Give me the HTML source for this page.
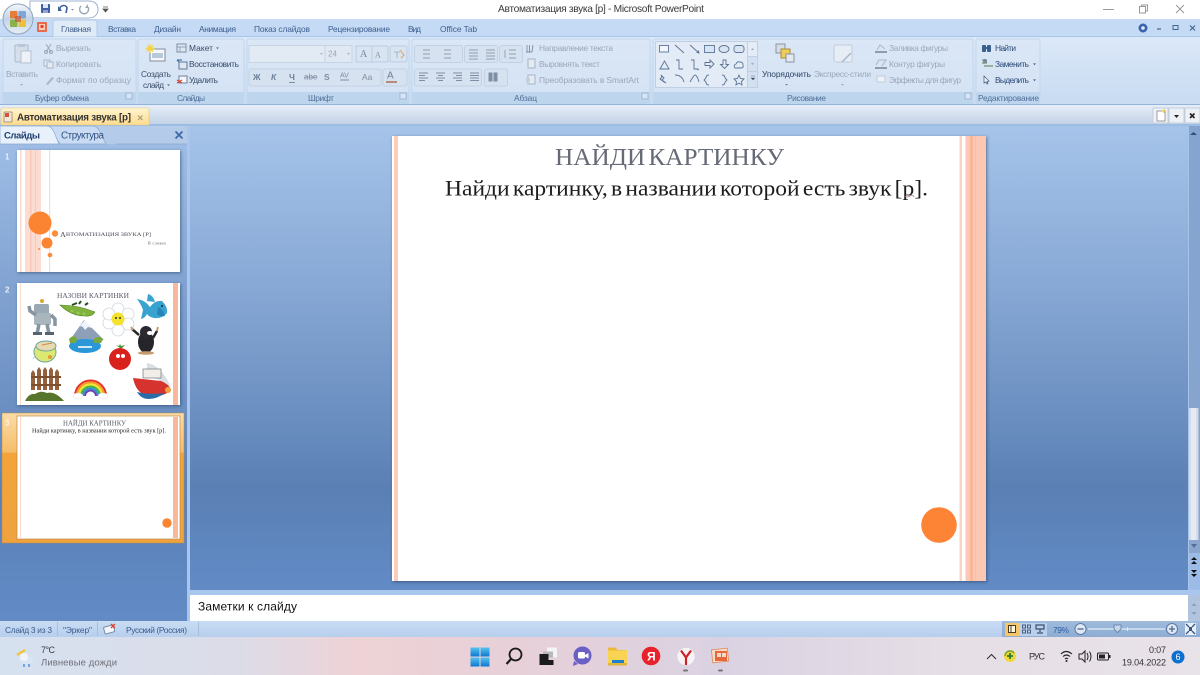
<!DOCTYPE html>
<html><head><meta charset="utf-8"><style>
html,body{margin:0;padding:0;width:1200px;height:675px;overflow:hidden;background:#fff}
svg{display:block}
text{font-family:"Liberation Sans",sans-serif;font-size:8.4px;fill:#44546a;dominant-baseline:central;white-space:pre}
.g{fill:#9aa7b8}.b{fill:#2c4a78}.l{fill:#4f6f98}.s{font-family:"Liberation Serif",serif}
.ic{fill:none;stroke:#5c7496;stroke-width:.9}
</style></head><body>
<svg width="1200" height="675" viewBox="0 0 1200 675" xmlns="http://www.w3.org/2000/svg">
<defs>
<linearGradient id="rb" x1="0" y1="0" x2="0" y2="1"><stop offset="0" stop-color="#dbe8f8"/><stop offset="1" stop-color="#c8dbf2"/></linearGradient>
<linearGradient id="grp" x1="0" y1="0" x2="0" y2="1"><stop offset="0" stop-color="#dbe7f6"/><stop offset="1" stop-color="#d3e2f4"/></linearGradient>
<linearGradient id="tabbar" x1="0" y1="0" x2="0" y2="1"><stop offset="0" stop-color="#e6eef9"/><stop offset=".8" stop-color="#c9d7ea"/><stop offset="1" stop-color="#c2d2e7"/></linearGradient>
<linearGradient id="main" x1="0" y1="0" x2="0" y2="1"><stop offset="0" stop-color="#a6c4ea"/><stop offset=".35" stop-color="#87a8d5"/><stop offset=".78" stop-color="#5a80b4"/><stop offset="1" stop-color="#628bc6"/></linearGradient>
<linearGradient id="left" x1="0" y1="0" x2="0" y2="1"><stop offset="0" stop-color="#a2c0e8"/><stop offset=".3" stop-color="#84a5d3"/><stop offset=".75" stop-color="#5a80b6"/><stop offset="1" stop-color="#628bc6"/></linearGradient>
<linearGradient id="doc" x1="0" y1="0" x2="0" y2="1"><stop offset="0" stop-color="#fff4cf"/><stop offset="1" stop-color="#ffdc8e"/></linearGradient>
<linearGradient id="sel" x1="0" y1="0" x2="0" y2="1"><stop offset="0" stop-color="#fbdca8"/><stop offset=".3" stop-color="#f5bd6a"/><stop offset=".31" stop-color="#f2a43a"/><stop offset="1" stop-color="#f0a23f"/></linearGradient>
<linearGradient id="status" x1="0" y1="0" x2="0" y2="1"><stop offset="0" stop-color="#c9dcf4"/><stop offset="1" stop-color="#b7cfed"/></linearGradient>
<linearGradient id="zoombar" x1="0" y1="0" x2="0" y2="1"><stop offset="0" stop-color="#9fbbdd"/><stop offset="1" stop-color="#8fadd3"/></linearGradient>
<linearGradient id="task" x1="0" y1="0" x2="1" y2="0"><stop offset="0" stop-color="#d6e1f0"/><stop offset=".2" stop-color="#dcdce8"/><stop offset=".3" stop-color="#eed2d5"/><stop offset=".45" stop-color="#e6d0d9"/><stop offset=".6" stop-color="#dad2e2"/><stop offset=".8" stop-color="#e6dfe6"/><stop offset="1" stop-color="#e8e3e8"/></linearGradient>
<linearGradient id="orb" x1="0" y1="0" x2="0" y2="1"><stop offset="0" stop-color="#f4f7fb"/><stop offset=".5" stop-color="#c3d3e6"/><stop offset="1" stop-color="#e6eef6"/></linearGradient>
<linearGradient id="win" x1="0" y1="0" x2="0" y2="1"><stop offset="0" stop-color="#56c3f2"/><stop offset="1" stop-color="#0d78cf"/></linearGradient>
<filter id="sh" x="-5%" y="-5%" width="110%" height="110%"><feDropShadow dx="1" dy="1" stdDeviation="1.6" flood-color="#1c3050" flood-opacity=".55"/></filter>
<filter id="bl"><feGaussianBlur stdDeviation=".35"/></filter>
</defs>

<!-- title bar -->
<rect width="1200" height="19" fill="#fff"/>
<rect y="19" width="1200" height="18" fill="#c5daf4"/>
<rect y="36" width="1200" height="1" fill="#a9c4e6"/>
<text x="498" y="9.500" style="font-size:10.200px;fill:#3a3a3a" textLength="206">Автоматизация звука [р] - Microsoft PowerPoint</text>
<path d="M1103 9.500h11" stroke="#9a9a9a"/>
<rect x="1139.500" y="6.500" width="6" height="6.500" fill="none" stroke="#9a9a9a"/><path d="M1141.500 6.500v-1.500h6v6h-2" fill="none" stroke="#9a9a9a"/>
<path d="M1176 5l8 8M1184 5l-8 8" stroke="#9a9a9a"/>

<!-- quick access -->
<path d="M30 1h58c8 0 10 4 10 8.500s-3 8.500-10 8.500h-58z" fill="#fff" stroke="#9bb3cf"/>
<rect x="41" y="4" width="9" height="9" rx="1" fill="#3f5fa6"/><rect x="43" y="4" width="5" height="4" fill="#dfe6f3"/><rect x="43" y="10" width="5" height="3" fill="#93a5c9"/>
<path d="M60 10c-1-5 6-6 7-2l-1 5" fill="none" stroke="#3a5f9c" stroke-width="1.600"/><path d="M58 6v5h4z" fill="#3a5f9c"/>
<path d="M71 9h3l-1.500 1.500z" fill="#7a8798"/>
<path d="M81 6a4.500 4.500 0 1 0 7 1" fill="none" stroke="#9aa7b8" stroke-width="1.400"/><path d="M88 4v4h-3z" fill="#9aa7b8"/>
<path d="M103 7h5M103 9h5l-2.500 3z" stroke="#555" stroke-width=".8" fill="#555"/>

<!-- tabs -->
<path d="M53 37v-14q0-3 3-3h38q3 0 3 3v14z" fill="#e0ebf8" stroke="#b4cbe6"/>
<rect x="37" y="22" width="10" height="10" rx="1" fill="#e96a4a"/><rect x="39" y="24" width="6" height="6" fill="#f8cdbb"/><rect x="40.500" y="25" width="3" height="3" fill="#d9482d"/>
<text x="61" y="29" style="fill:#3d5b85" textLength="30">Главная</text>
<text x="108" y="29" textLength="28" style="fill:#3d5f90">Вставка</text>
<text x="154" y="29" textLength="27" style="fill:#3d5f90">Дизайн</text>
<text x="199" y="29" textLength="37" style="fill:#3d5f90">Анимация</text>
<text x="254" y="29" textLength="56" style="fill:#3d5f90">Показ слайдов</text>
<text x="328" y="29" textLength="62" style="fill:#3d5f90">Рецензирование</text>
<text x="408" y="29" textLength="13" style="fill:#3d5f90">Вид</text>
<text x="440" y="29" textLength="37" style="fill:#3d5f90">Office Tab</text>
<circle cx="1143" cy="28" r="4.500" fill="#3b64b0"/><circle cx="1143" cy="28" r="1.800" fill="#dfe9f7"/>
<path d="M1157 29h4" stroke="#45648f" stroke-width="1.200"/><rect x="1173" y="25.500" width="5" height="4" fill="none" stroke="#45648f"/><path d="M1190 25.500l5 5M1195 25.500l-5 5" stroke="#45648f" stroke-width="1.200"/>

<!-- ribbon -->
<rect y="37" width="1200" height="68" fill="url(#rb)"/>
<g>
<rect x="3" y="39" width="133" height="65" rx="2" fill="url(#grp)" stroke="#c3d7ee"/><rect x="3.500" y="92" width="132" height="12" fill="#bed5ee"/>
<rect x="138" y="39" width="106" height="65" rx="2" fill="url(#grp)" stroke="#c3d7ee"/><rect x="138.500" y="92" width="105" height="12" fill="#bed5ee"/>
<rect x="247" y="39" width="162" height="65" rx="2" fill="url(#grp)" stroke="#c3d7ee"/><rect x="247.500" y="92" width="161" height="12" fill="#bed5ee"/>
<rect x="412" y="39" width="238" height="65" rx="2" fill="url(#grp)" stroke="#c3d7ee"/><rect x="412.500" y="92" width="237" height="12" fill="#bed5ee"/>
<rect x="653" y="39" width="320" height="65" rx="2" fill="url(#grp)" stroke="#c3d7ee"/><rect x="653.500" y="92" width="319" height="12" fill="#bed5ee"/>
<rect x="976" y="39" width="64" height="65" rx="2" fill="url(#grp)" stroke="#c3d7ee"/><rect x="976.500" y="92" width="63" height="12" fill="#bed5ee"/>
</g>
<rect y="104" width="1200" height="1" fill="#93b3da"/>

<!-- clipboard -->
<rect x="15" y="45" width="13" height="17" rx="1" fill="#d5dfeb" stroke="#aab9cb"/><rect x="18" y="44" width="7" height="3" fill="#b9c6d6"/><rect x="21" y="51" width="10" height="12" fill="#eef2f7" stroke="#b4c1d0"/>
<text x="6" y="74" class="g" textLength="32">Вставить</text>
<path d="M20 84h3l-1.500 1.500z" fill="#9aa7b8"/>
<path d="M46 44l5 8M51 44l-5 8" stroke="#9aa7b8"/><circle cx="46" cy="52" r="1.500" fill="none" stroke="#9aa7b8"/><circle cx="51" cy="52" r="1.500" fill="none" stroke="#9aa7b8"/>
<rect x="44" y="60" width="6" height="6" fill="#e4ebf3" stroke="#a8b6c8"/><rect x="47" y="62" width="6" height="6" fill="#e4ebf3" stroke="#a8b6c8"/>
<path d="M46 84l6-7 2 1-6 7z" fill="#aab7c7"/>
<text x="56" y="48" class="g" textLength="35">Вырезать</text>
<text x="56" y="64" class="g" textLength="45">Копировать</text>
<text x="56" y="80" class="g" textLength="75">Формат по образцу</text>
<text x="35" y="98" class="l" textLength="54">Буфер обмена</text>
<rect x="126" y="93" width="6" height="6" fill="#d6e4f4" stroke="#8ea9c9" stroke-width=".7"/>

<!-- slides group -->
<rect x="150" y="49" width="15" height="12" fill="#f4f7fb" stroke="#7f8da0"/><rect x="152" y="53" width="11" height="5" fill="#b9c9dc"/>
<path d="M150 44v9M145.500 48.500h9M147 45.500l6 6M153 45.500l-6 6" stroke="#f5d33d" stroke-width="1.400"/>
<text x="141" y="74" style="fill:#3c4f6a" textLength="30">Создать</text>
<text x="143" y="85" style="fill:#3c4f6a" textLength="21">слайд</text>
<path d="M167 84.500h3l-1.500 1.500z" fill="#4a5a70"/>
<rect x="177" y="44" width="9" height="8" fill="#dfe7f1" stroke="#7c8fa8"/><path d="M177 47h9M180 47v5" stroke="#7c8fa8" stroke-width=".7"/>
<rect x="179" y="62" width="8" height="7" fill="#dfe7f1" stroke="#5f7796"/><path d="M177 60h5M177 60l2 2" stroke="#2c5a9c"/>
<rect x="179" y="76" width="8" height="7" fill="#f3f6fa" stroke="#6f8099"/><path d="M177 80l5 3M177 83l5-3" stroke="#d8432d" stroke-width="1.200"/>
<text x="189" y="48" style="fill:#354a6a" textLength="24">Макет</text><path d="M216 47.500h3l-1.500 1.500z" fill="#4a5a70"/>
<text x="189" y="64" style="fill:#354a6a" textLength="50">Восстановить</text>
<text x="189" y="80" style="fill:#354a6a" textLength="29">Удалить</text>
<text x="177" y="98" class="l" textLength="28">Слайды</text>

<!-- font group -->
<rect x="249" y="45.500" width="103" height="17" fill="#dfe8f3" stroke="#c5d3e3"/><rect x="249" y="45.500" width="76" height="17" fill="#e2eaf4" stroke="#c5d3e3"/>
<path d="M320 53h3l-1.500 2z" fill="#a9b5c4"/><path d="M347 53h3l-1.500 2z" fill="#a9b5c4"/>
<text x="328" y="54" class="g" style="font-size:8px" textLength="9">24</text>
<rect x="356" y="46" width="16" height="16" fill="#d9e4f1" stroke="#bccde1"/><rect x="372" y="46" width="16" height="16" fill="#d9e4f1" stroke="#bccde1"/><rect x="390" y="46" width="17" height="16" rx="2" fill="#d9e4f1" stroke="#bccde1"/>
<text x="360" y="54.500" class="s" style="font-size:10px;fill:#7287a3">A</text><text x="375" y="55" class="s" style="font-size:8px;fill:#7287a3">A</text>
<path d="M394 52h6M397 52v6" stroke="#a8b6c8"/><path d="M400 50l4 5-3 3" stroke="#d8a36a" fill="none"/>
<rect x="249" y="69" width="132" height="17" rx="2" fill="#d7e2f0" stroke="#c2d1e3"/>
<rect x="383" y="69" width="24" height="17" rx="2" fill="#d7e2f0" stroke="#c2d1e3"/>
<text x="253" y="77" style="font-weight:bold;fill:#6d7f97" textLength="8">Ж</text>
<text x="271" y="77" style="font-style:italic;font-weight:bold;fill:#6d7f97">К</text>
<text x="289" y="77" style="font-weight:bold;fill:#6d7f97;text-decoration:underline">Ч</text>
<text x="304" y="77" style="fill:#7d8da3;font-size:8px;text-decoration:line-through">abe</text>
<text x="324" y="77" style="font-weight:bold;fill:#7d8da3">S</text>
<text x="340" y="76" style="fill:#7d8da3;font-size:7px">AV</text>
<text x="362" y="77" style="fill:#7d8da3">Aa</text>
<text x="387" y="76" style="fill:#6d7f97;font-size:10px">A</text>
<path d="M340 80h9" stroke="#7d8da3"/><rect x="386" y="81" width="11" height="2" fill="#b88a7c"/>
<text x="308" y="98" class="l" textLength="26">Шрифт</text>
<rect x="400" y="93" width="6" height="6" fill="#d6e4f4" stroke="#8ea9c9" stroke-width=".7"/>

<!-- paragraph group -->
<rect x="414.500" y="45.500" width="48" height="17" rx="2" fill="#d7e2f0" stroke="#c2d1e3"/>
<rect x="464.500" y="45.500" width="33" height="17" rx="2" fill="#d7e2f0" stroke="#c2d1e3"/>
<rect x="499.500" y="45.500" width="23" height="17" rx="2" fill="#d7e2f0" stroke="#c2d1e3"/>
<g stroke="#8d9db1" stroke-width=".9">
<path d="M423 50h7M423 54h7M423 58h7M444 50h7M444 54h7M444 58h7"/>
<path d="M469 50h9M469 53h9M469 56h9M469 59h9M486 50h9M486 53h9M486 56h9M486 59h9"/>
<path d="M509 50h7M509 54h7M509 58h7M505 50v8"/>
</g>
<rect x="414.500" y="69" width="67" height="17" rx="2" fill="#d7e2f0" stroke="#c2d1e3"/>
<rect x="484.500" y="69" width="23" height="17" rx="2" fill="#d7e2f0" stroke="#c2d1e3"/>
<g stroke="#7e8ea4" stroke-width="1">
<path d="M419 73h9M419 75.500h6M419 78h9M419 80.500h6M436 73h9M438 75.500h5M436 78h9M438 80.500h5M453 73h9M456 75.500h6M453 78h9M456 80.500h6M470 73h9M470 75.500h9M470 78h9M470 80.500h9"/>
<path d="M489 73h3v8h-3zM494 73h3v8h-3z" fill="#7e8ea4"/>
</g>
<path d="M527 52v-7M529.500 52v-7M526 52h6M532 52l1-7" stroke="#7e8ea4" stroke-width=".9" fill="none"/>
<rect x="528" y="59" width="7" height="9" fill="#e3eaf3" stroke="#a7b5c7"/>
<rect x="528" y="75" width="7" height="9" fill="#e3eaf3" stroke="#a7b5c7"/><rect x="526" y="78" width="4" height="4" fill="#c3cfde"/>
<text x="539" y="48" class="g" textLength="74">Направление текста</text>
<text x="539" y="64" class="g" textLength="61">Выровнять текст</text>
<text x="539" y="80" class="g" textLength="100">Преобразовать в SmartArt</text>
<text x="514" y="98" class="l" textLength="23">Абзац</text>
<rect x="642" y="93" width="6" height="6" fill="#d6e4f4" stroke="#8ea9c9" stroke-width=".7"/>

<!-- shapes gallery -->
<rect x="655.500" y="41.500" width="102" height="46" fill="#e2ebf6" stroke="#bfd0e5"/>
<rect x="747.500" y="41.500" width="10" height="15" fill="#e3ecf7" stroke="#bfd0e5"/><rect x="747.500" y="56.500" width="10" height="15" fill="#d2e0f1" stroke="#bfd0e5"/><rect x="747.500" y="71.500" width="10" height="16" fill="#d2e0f1" stroke="#bfd0e5"/>
<path d="M751 50h3l-1.500-2zM751 63h3l-1.500 2z" fill="#9aa9bd"/><path d="M751 76h4M751 78h4l-2 2z" fill="#44546a" stroke="#44546a" stroke-width=".4"/>
<g class="ic">
<rect x="659.500" y="45.500" width="9" height="6.500" fill="#f1f5fa"/>
<path d="M675 45l9 8M690 45l9 8"/><path d="M699 53l-2-.5 1.500-1.500z" fill="#5c7496"/>
<rect x="704.500" y="45.500" width="10" height="7" fill="#d8e4f2"/><ellipse cx="724" cy="49" rx="5" ry="3.500" fill="#d8e4f2"/><rect x="734" y="45.500" width="10" height="7" rx="2.500" fill="#d8e4f2"/>
<path d="M660 69l4.500-8 4.500 8zM676 60h3v9h4M691 60h3v9h4M699 69l-1.500 1"/>
<path d="M705 62.500h5v-2.500l4 4-4 4v-2.500h-5zM723 60h3v4.500h2.500l-4 4-4-4h2.500z"/>
<path d="M735 68q-2-3 1-4 1-3 4-2 3 0 3 3 1 3-2 3z"/>
<path d="M661 75l3 3-2 2 4 3-2-1-4-3 2-2z"/><path d="M675 75q7 0 9 7M690 82q4-7 5-7 2 0 4 7"/><path d="M709 75q-3 0-3 3l-2 2 2 2q0 3 3 3M722 75q3 0 3 3l2 2-2 2q0 3-3 3"/><path d="M739 75l1.500 3.500 3.500.5-2.500 2.500.5 3.500-3-2-3 2 .5-3.500-2.500-2.500 3.500-.5z"/>
</g>
<!-- arrange -->
<rect x="776" y="44" width="9" height="9" fill="#d7dde6" stroke="#8893a3"/><rect x="781" y="49" width="9" height="9" fill="#f2cc55" stroke="#a58e3f"/><rect x="786" y="54" width="8" height="8" fill="#e4e9f0" stroke="#8893a3"/>
<text x="762" y="74" style="fill:#2f4566" textLength="49">Упорядочить</text>
<path d="M785 84h3l-1.500 1.500z" fill="#6d7f97"/>
<rect x="834" y="45" width="18" height="17" rx="2" fill="#e7edf5" stroke="#c1ccd9"/><path d="M842 62l9-9" stroke="#a8b6c8" stroke-width="1.500"/>
<text x="814" y="74" class="g" textLength="57">Экспресс-стили</text>
<path d="M841 84h3l-1.500 1.500z" fill="#9aa7b8"/>
<rect x="875" y="51" width="12" height="2" fill="#8f9cae"/><path d="M877 50l3-5 5 4" fill="none" stroke="#a8b6c8"/>
<rect x="875" y="67" width="12" height="2" fill="#8f9cae"/><path d="M876 65l3-5h7l-4 6" fill="none" stroke="#a8b6c8"/>
<rect x="877" y="76" width="8" height="6" fill="#eef2f7" stroke="#c1ccd9"/>
<text x="889" y="48" class="g" textLength="59">Заливка фигуры</text>
<text x="889" y="64" class="g" textLength="56">Контур фигуры</text>
<text x="889" y="80" class="g" textLength="72">Эффекты для фигур</text>
<text x="787" y="98" class="l" textLength="39">Рисование</text>
<rect x="965" y="93" width="6" height="6" fill="#d6e4f4" stroke="#8ea9c9" stroke-width=".7"/>

<!-- editing -->
<rect x="982" y="45" width="4" height="7" rx="1" fill="#3b5f8e"/><rect x="987" y="45" width="4" height="7" rx="1" fill="#3b5f8e"/><rect x="985" y="47" width="3" height="2" fill="#3b5f8e"/>
<path d="M982 60h5M982 63h5M984 66h9" stroke="#5d7a4e"/><circle cx="985" cy="61" r="2" fill="#6f8a9f"/>
<path d="M984 76l5 5-2 .5 1 2-1 .5-1-2-2 1z" fill="#eef3f9" stroke="#3e5877" stroke-width=".7"/>
<text x="995" y="48" style="fill:#2c4a78" textLength="21">Найти</text>
<text x="995" y="64" style="fill:#2c4a78" textLength="34">Заменить</text><path d="M1033 63.500h3l-1.500 1.500z" fill="#2c4a78"/>
<text x="995" y="80" style="fill:#2c4a78" textLength="34">Выделить</text><path d="M1033 79.500h3l-1.500 1.500z" fill="#2c4a78"/>
<text x="978" y="98" class="l" textLength="61">Редактирование</text>

<!-- office orb -->
<circle cx="18" cy="19" r="15" fill="url(#orb)" stroke="#8ea4bf"/>
<rect x="10" y="11" width="7.500" height="7.500" rx="1" fill="#e57c3a"/><rect x="18.500" y="11" width="7.500" height="7.500" rx="1" fill="#7fa6d8"/><rect x="10" y="19.500" width="7.500" height="7.500" rx="1" fill="#8cb04a"/><rect x="18.500" y="19.500" width="7.500" height="7.500" rx="1" fill="#e9c13f"/>
<rect x="15" y="16" width="6" height="6" fill="#c45a35" opacity=".7"/>

<!-- doc tab bar -->
<rect y="105" width="1200" height="20" fill="url(#tabbar)"/>
<rect y="124" width="1200" height="2" fill="#9dbce4"/>
<path d="M1 125v-15q0-2 2-2h144q2 0 2 2v15z" fill="url(#doc)" stroke="#e0c682" stroke-width=".6"/>
<rect x="4" y="112" width="8" height="10" fill="#f5e6da" stroke="#8b7b6a" stroke-width=".7"/><rect x="5" y="113" width="4" height="4" fill="#d8523a"/>
<text x="17" y="118" style="font-size:9.800px;font-weight:bold;fill:#333" textLength="114">Автоматизация звука [р]</text>
<path d="M138 115.500l4.500 4.500M142.500 115.500l-4.500 4.500" stroke="#a89a7d" stroke-width="1.200"/>
<rect x="1153" y="108" width="15" height="15" fill="#eef2f7" stroke="#c2cede"/><rect x="1157" y="111" width="8" height="10" fill="#fff" stroke="#777" stroke-width=".7"/><path d="M1164 109v4M1162 111h4" stroke="#e8c53a"/>
<rect x="1169" y="108" width="15" height="15" fill="#eef2f7" stroke="#c2cede"/><path d="M1174 115h5l-2.500 3z" fill="#222"/>
<rect x="1185" y="108" width="15" height="15" fill="#eef2f7" stroke="#c2cede"/><path d="M1190 113.500l4.500 4.500M1194.500 113.500l-4.500 4.500" stroke="#222" stroke-width="1.600"/>

<!-- main area -->
<rect x="190" y="126" width="998" height="464" fill="url(#main)"/>
<rect x="0" y="126" width="187" height="495" fill="url(#left)"/>
<rect x="187" y="126" width="3" height="495" fill="#a8c6ee"/>

<!-- left panel tabs -->
<rect y="126" width="187" height="18" fill="#b4cbea"/>
<path d="M60 144l-4-6q-3-6-8-6v-6h45q4 0 7 6l6 12z" fill="#c9dcf4" stroke="#8aa9cf" stroke-width=".7"/>
<path d="M0 126h47q4 0 7 6l5 12H0z" fill="#e8f0fb" stroke="#8aa9cf" stroke-width=".7"/>
<path d="M116 144h71" stroke="#8aa9cf" stroke-width=".7"/>
<text x="4" y="136" style="font-size:9.500px;font-weight:bold;fill:#1f3f6f" textLength="36">Слайды</text>
<text x="61" y="136" style="font-size:9.800px;fill:#2f517f" textLength="43">Структура</text>
<path d="M175.500 131.500l7 7M182.500 131.500l-7 7" stroke="#3f6aa5" stroke-width="1.800"/>

<!-- thumbnails -->
<text x="5" y="157" style="font-size:8px;fill:#e6eef9;font-weight:bold">1</text>
<g filter="url(#sh)"><rect x="17" y="150" width="163" height="122" fill="#fff"/></g>
<g>
<rect x="20" y="150" width="1.500" height="122" fill="#fbd9cd"/>
<rect x="25" y="150" width="16" height="122" fill="#fcdcd0"/><rect x="30" y="150" width="1.500" height="122" fill="#f8c9b6"/><rect x="35" y="150" width="1" height="122" fill="#f8c9b6"/>
<rect x="49" y="150" width="1.200" height="122" fill="#fbd9cd"/>
<circle cx="40" cy="223" r="11.500" fill="#fa8432"/><circle cx="55" cy="233.500" r="3.200" fill="#fa8c3c"/><circle cx="47" cy="243" r="5.500" fill="#fa8432"/><circle cx="50" cy="255" r="2.300" fill="#fa8c3c"/><circle cx="39" cy="249" r="1" fill="#fa8c3c"/>
</g>
<text x="60" y="235" class="s" style="font-size:5.600px;fill:#4a4d58" textLength="91" lengthAdjust="spacingAndGlyphs"><tspan style="font-size:7px">А</tspan>ВТОМАТИЗАЦИЯ ЗВУКА [Р]</text>
<text x="148" y="243" class="s" style="font-size:4px;fill:#555" textLength="18">В словах</text>

<text x="5" y="290" style="font-size:8px;fill:#e6eef9;font-weight:bold">2</text>
<g filter="url(#sh)"><rect x="17" y="283" width="163" height="122" fill="#fff"/></g>
<rect x="20" y="283" width="1" height="122" fill="#fbd9cd"/><rect x="173" y="283" width="5" height="122" fill="#f9b79b"/>
<text x="57" y="295.500" class="s" style="font-size:7.500px;fill:#5a5d68" textLength="72" lengthAdjust="spacingAndGlyphs">НАЗОВИ КАРТИНКИ</text>
<g filter="url(#bl)">
<!-- robot -->
<circle cx="42" cy="301" r="2" fill="#d9a92f"/><rect x="34" y="304" width="15" height="10" rx="2" fill="#9aa9b4"/><rect x="34" y="313" width="17" height="12" rx="2" fill="#a9b6be"/><path d="M36 315l-6-4-1-5M51 315l4 4v7M39 324l-2 10M47 324l2 10" stroke="#8795a1" stroke-width="3.500" fill="none"/><rect x="33" y="332" width="9" height="3" fill="#55636f"/><rect x="45" y="332" width="9" height="3" fill="#55636f"/>
<!-- peas -->
<path d="M60 305q18 0 35 7-3 5-10 4-14 0-25-11z" fill="#7fb33a" stroke="#4f8024" stroke-width=".6"/><path d="M72 305l5-2M79 304l2-3M85 305l3-2" stroke="#2c4a24" stroke-width="2"/><circle cx="72" cy="311" r="1.500" fill="#95c955"/><circle cx="78" cy="313" r="1.500" fill="#95c955"/><circle cx="84" cy="314" r="1.500" fill="#95c955"/>
<!-- flower -->
<g fill="#fff" stroke="#cdd6dc" stroke-width=".8"><circle cx="118" cy="309" r="6"/><circle cx="128" cy="314" r="6"/><circle cx="128" cy="324" r="6"/><circle cx="118" cy="330" r="6"/><circle cx="109" cy="323" r="6"/><circle cx="109" cy="314" r="6"/></g><circle cx="118" cy="319" r="6.500" fill="#f5e22e"/><circle cx="116" cy="318" r="1" fill="#333"/><circle cx="120" cy="318" r="1" fill="#333"/>
<!-- fish -->
<path d="M137 299q8 1 13 8 5-7 12-6 6 6 5 12-5 6-13 5-5-1-7-4-2 4-6 5l2-9q-2-6-6-11z" fill="#37a3cf"/><path d="M148 294q5 1 7 8l-8-1z" fill="#37a3cf"/><circle cx="162" cy="306" r="1" fill="#123"/><path d="M158 307q5 2 7 9-6 1-8-2z" fill="#2784b8"/>
<!-- mountain -->
<path d="M70 340l14-20 20 20z" fill="#8da0b8"/><path d="M80 326l5-6 7 8-4-1-3 3-2-3z" fill="#f0f4fa"/><ellipse cx="85" cy="346" rx="16" ry="7" fill="#2b97d9"/><path d="M69 339q4-5 8-1l-1 5h-6zM94 339q5-4 9 0l-2 4h-7z" fill="#7aa83c"/><path d="M78 347h14" stroke="#cfe9f7" stroke-width="2"/>
<!-- mole -->
<ellipse cx="146" cy="342" rx="8" ry="11" fill="#27272b"/><circle cx="146" cy="332" r="6" fill="#2a2a2e"/><ellipse cx="150" cy="333" rx="3" ry="2" fill="#fff"/><path d="M139 335l-7-6M153 338l4-7" stroke="#2a2a2e" stroke-width="2.500"/><path d="M133 330l-2-3M157 331l1-4" stroke="#c89a70" stroke-width="2"/><ellipse cx="146" cy="353" rx="8" ry="1.800" fill="#c89a70"/>
<!-- drum -->
<ellipse cx="45" cy="352" rx="11" ry="10" fill="#dde86f" stroke="#6aa5a0"/><ellipse cx="46" cy="346" rx="10" ry="5" fill="#e9d9b0" stroke="#6aa5a0"/><path d="M42 345l10-2" stroke="#c88d4d"/><path d="M36 354l-3 5" stroke="#bcd" stroke-width="1"/><circle cx="50" cy="357" r="2" fill="#e09a3a"/>
<!-- tomato -->
<circle cx="120" cy="359" r="11" fill="#d9201f"/><path d="M120 348l-4-3 3 1 1-2 1 2 4-1-3 3z" fill="#4a9035"/><circle cx="118" cy="356" r="2" fill="#fff"/><circle cx="123" cy="356" r="2" fill="#fff"/>
<!-- fence -->
<path d="M31 390v-17l2-3 2 3v17zM37 390v-20l2-3 2 3v20zM43 390v-20l2-3 2 3v20zM49 390v-20l2-3 2 3v20zM55 390v-18l2-3 2 3v18z" fill="#95603a"/><rect x="31" y="376" width="30" height="2" fill="#7d4f2e"/><rect x="31" y="384" width="30" height="2" fill="#7d4f2e"/>
<path d="M25 401q4-8 10-7 6-4 12-1 8-2 17 8z" fill="#58752d"/>
<!-- rainbow -->
<g fill="none" stroke-width="2"><path d="M75 396a15.500 15.500 0 0 1 31 0" stroke="#e7302b"/><path d="M77 396a13.500 13.500 0 0 1 27 0" stroke="#f59b23"/><path d="M79 396a11.500 11.500 0 0 1 23 0" stroke="#f3e52d"/><path d="M81 396a9.500 9.500 0 0 1 19 0" stroke="#4ab43a"/><path d="M83 396a7.500 7.500 0 0 1 15 0" stroke="#2f8fd9"/><path d="M85 396a5.500 5.500 0 0 1 11 0" stroke="#6a44b0"/></g><ellipse cx="78" cy="396" rx="5" ry="3" fill="#fff" stroke="#d8dee4" stroke-width=".5"/><ellipse cx="103" cy="396" rx="5" ry="3" fill="#fff" stroke="#d8dee4" stroke-width=".5"/>
<!-- ship -->
<path d="M147 363q14 2 24 24-10-6-24-13z" fill="#d9dee2"/><rect x="143" y="369" width="18" height="9" fill="#f1ede8" stroke="#5c6670" stroke-width=".6"/><path d="M133 378l28 3q8 3 10 9-6 6-16 6-18 2-22-18z" fill="#d6302d"/><path d="M137 392q12 3 28 1-8 6-16 6-8 0-12-7z" fill="#2c6ca8"/><circle cx="168" cy="390" r="3" fill="#f0a040"/>
</g>

<g>
<rect x="2" y="413" width="182" height="130" fill="url(#sel)" stroke="#b98a45" stroke-width=".5"/>
<text x="5" y="423" style="font-size:8px;fill:#fff3dc;font-weight:bold">3</text>
<rect x="17" y="416" width="163" height="123" fill="#fff" stroke="#c08a45" stroke-width=".7"/>
<rect x="20" y="417" width="1" height="121" fill="#fbd9cd"/><rect x="173" y="417" width="5" height="121" fill="#f9b79b"/>
<text x="63" y="423" class="s" style="font-size:7.500px;fill:#5a5d68" textLength="63" lengthAdjust="spacingAndGlyphs">НАЙДИ КАРТИНКУ</text>
<text x="32" y="431" class="s" style="font-size:6.500px;fill:#222" textLength="134" lengthAdjust="spacingAndGlyphs">Найди картинку, в названии которой есть звук [р].</text>
<circle cx="167" cy="523" r="4.700" fill="#fa8432"/>
</g>

<!-- slide -->
<g filter="url(#sh)"><rect x="392" y="136" width="594" height="445" fill="#fff"/></g>
<rect x="394" y="136" width="4" height="445" fill="#fbcdbb"/>
<rect x="959.500" y="136" width="2.500" height="445" fill="#fcd3c2"/>
<rect x="965.500" y="136" width="20.500" height="445" fill="#fdc8b3"/>
<rect x="970" y="136" width="3" height="445" fill="#f8b69c"/>
<rect x="975" y="136" width="1" height="445" fill="#f9bca4"/>
<circle cx="939" cy="525" r="17.800" fill="#fd8335"/>
<text x="555" y="158" class="s" style="font-size:24px;fill:#666a76;word-spacing:-3px" textLength="229" lengthAdjust="spacingAndGlyphs">НАЙДИ КАРТИНКУ</text>
<text x="445" y="188" class="s" style="font-size:22.500px;fill:#1c1c1c;word-spacing:-2.500px" textLength="483" lengthAdjust="spacingAndGlyphs">Найди картинку, в названии которой есть звук [р].</text>
<path d="M905 196q2 2 5 0t4 1" stroke="#a88" fill="none" stroke-width=".8"/>

<!-- scrollbar -->
<rect x="1188" y="126" width="12" height="469" fill="#85a5d0"/>
<rect x="1188" y="126" width="1" height="469" fill="#a8c4e8"/>
<path d="M1190 135l3.500-3 3.500 3z" fill="#2f4f7f"/>
<rect x="1189" y="408" width="9.500" height="132" fill="#d4dcea"/><rect x="1191" y="408" width="5" height="132" fill="#e6ebf3"/>
<rect x="1189" y="540" width="11" height="13" fill="#8aa6cf"/><path d="M1191 544h6l-3 4z" fill="#546f9c"/>
<rect x="1189" y="553" width="11" height="37" fill="#9cbbe6"/>
<path d="M1191 560l3-3 3 3zM1191 564l3-3 3 3zM1191 570l3 3 3-3zM1191 574l3 3 3-3z" fill="#111"/>

<!-- notes -->
<rect x="190" y="590" width="1010" height="5" fill="#a8c6ee"/>
<rect x="190" y="595" width="998" height="26" fill="#fff"/>
<rect x="1188" y="595" width="12" height="26" fill="#b0c4de"/>
<path d="M1191 606l3-3 3 3zM1191 612l3 3 3-3z" fill="#8ea3c2"/>
<text x="198" y="606.500" style="font-size:12px;fill:#111" textLength="99">Заметки к слайду</text>

<!-- status bar -->
<rect y="621" width="1200" height="16" fill="url(#status)"/>
<path d="M57.500 622v14M97.500 622v14M198.500 622v14" stroke="#a9c0dd"/>
<text x="5" y="630" style="fill:#3c5c8c" textLength="47">Слайд 3 из 3</text>
<text x="63" y="630" style="fill:#3c5c8c" textLength="29">"Эркер"</text>
<rect x="104" y="626" width="10" height="7" rx="1" fill="#f3f6fa" stroke="#7b8da5" transform="rotate(-15 109 629)"/><path d="M111 624l4 4M115 624l-4 4" stroke="#d8432d" stroke-width="1.300"/>
<text x="126" y="630" style="fill:#3c5c8c" textLength="61">Русский (Россия)</text>
<rect x="1002" y="621" width="198" height="16" fill="url(#zoombar)"/>
<rect x="1005" y="623" width="42" height="13" fill="#b9d0ec"/>
<rect x="1005" y="623" width="14" height="13" fill="#f7c66b"/>
<rect x="1008.500" y="625.500" width="7" height="7" fill="#fff8e0" stroke="#4a3b1e"/><path d="M1011 626v6" stroke="#4a3b1e"/>
<rect x="1022.500" y="625" width="3" height="3" fill="none" stroke="#4a5f80"/><rect x="1027.500" y="625" width="3" height="3" fill="none" stroke="#4a5f80"/><rect x="1022.500" y="630" width="3" height="3" fill="none" stroke="#4a5f80"/><rect x="1027.500" y="630" width="3" height="3" fill="none" stroke="#4a5f80"/>
<path d="M1036 625h8v4h-8zM1040 629v3M1037 633h6" fill="none" stroke="#3c4f6e" stroke-width="1.200"/>
<text x="1053" y="630" style="fill:#2d5da0" textLength="16">79%</text>
<circle cx="1080.500" cy="629" r="5.500" fill="#dfe8f4" stroke="#5d7ba6"/><path d="M1077.500 629h6" stroke="#4a6690" stroke-width="1.300"/>
<path d="M1088 629h77" stroke="#d8e4f2" stroke-width="1.500"/><path d="M1127.500 627v4" stroke="#dfe8f4"/>
<path d="M1114 625h7v4l-3.500 3.500-3.500-3.500z" fill="#c7d6ea" stroke="#5d7ba6" stroke-width=".8"/>
<circle cx="1172" cy="629" r="5.500" fill="#dfe8f4" stroke="#5d7ba6"/><path d="M1169 629h6M1172 626v6" stroke="#4a6690" stroke-width="1.300"/>
<rect x="1185" y="623" width="11" height="12" fill="#e8eff8"/><path d="M1186 624l3 3M1195 624l-3 3M1186 634l3-3M1195 634l-3-3" stroke="#38557f" stroke-width="1.300"/><rect x="1189" y="627" width="3" height="4" fill="#38557f"/>

<!-- taskbar -->
<rect y="637" width="1200" height="38" fill="url(#task)"/>
<ellipse cx="26" cy="660" rx="7" ry="4.500" fill="#d8e6f4"/><circle cx="24" cy="657" r="4" fill="#eef4fa"/><path d="M17 655l8-5" stroke="#f0c43a" stroke-width="2.500"/><path d="M24 664v3M29 664v3" stroke="#4f94d8" stroke-width="1.500"/>
<text x="41" y="650" style="font-size:9px;fill:#3a3a3a" textLength="14">7°C</text>
<text x="41" y="663" style="font-size:9.500px;fill:#6f7078" textLength="76">Ливневые дожди</text>
<!-- windows -->
<rect x="470.500" y="647.500" width="9" height="9" fill="url(#win)"/><rect x="480.500" y="647.500" width="9" height="9" fill="url(#win)"/><rect x="470.500" y="657.500" width="9" height="9" fill="url(#win)"/><rect x="480.500" y="657.500" width="9" height="9" fill="url(#win)"/>
<!-- search -->
<circle cx="515.500" cy="654.500" r="6" fill="none" stroke="#1b1b1b" stroke-width="1.800"/><path d="M511 659l-4.500 5" stroke="#1b1b1b" stroke-width="2.200"/>
<!-- task view -->
<rect x="547" y="647.500" width="10" height="10" fill="#f4f4f6"/><rect x="543" y="651.500" width="10" height="6" fill="#b8b8bc"/><rect x="539.500" y="654" width="9" height="11" fill="#1b1b1b"/><rect x="548.500" y="660" width="5" height="5" fill="#1b1b1b"/>
<!-- meet -->
<circle cx="582.500" cy="655.500" r="9" fill="#6a5fc4"/><path d="M574 661l-1 5 5-2z" fill="#6a5fc4"/><rect x="578" y="652" width="7" height="6.500" rx="1.500" fill="#fff"/><path d="M585 655l3.500-2v5.500l-3.500-2z" fill="#fff"/>
<!-- folder -->
<path d="M608 649q0-1.500 1.500-1.500h6l2 2.500h9v15h-18.500z" fill="#e8b93a"/><rect x="608" y="650.500" width="19" height="15" fill="#f9d452"/><rect x="612" y="660" width="12" height="3.500" fill="#1d7fd0"/><rect x="608" y="663" width="19" height="2.500" fill="#e0b53a"/>
<!-- yandex -->
<circle cx="651" cy="656" r="9.300" fill="#e8222a"/><text x="647" y="656.500" style="font-size:12px;font-weight:bold;fill:#fff">Я</text>
<!-- browser -->
<circle cx="686" cy="656.500" r="8.700" fill="#f5f3f3"/><path d="M681 650.500l5 7 5-7" fill="none" stroke="#d0202a" stroke-width="2.200"/><path d="M686 657v8" stroke="#d0202a" stroke-width="2.200"/>
<rect x="683" y="669.500" width="5" height="2" rx="1" fill="#777"/>
<!-- ppt -->
<rect x="712" y="649" width="16" height="13" fill="#f4dcc8" stroke="#e08a5e" stroke-width=".8" transform="rotate(-6 720 655)"/><rect x="715" y="651" width="12" height="10" fill="#e8673a"/><rect x="717" y="653" width="4" height="4" fill="#f9d9c8"/><rect x="722" y="653" width="4" height="4" fill="#f9d9c8"/>
<rect x="718" y="669.500" width="5" height="2" rx="1" fill="#777"/>
<!-- tray -->
<path d="M987 659l4.500-4.500 4.500 4.500" fill="none" stroke="#333" stroke-width="1.100"/>
<circle cx="1010" cy="656" r="6" fill="#f0d83a"/><path d="M1005 656a5 5 0 0 1 9-3" fill="none" stroke="#6aa53a" stroke-width="1.500"/><path d="M1007 656h6M1010 653v6" stroke="#2f7a35" stroke-width="1.800"/>
<text x="1029" y="656.500" style="font-size:9px;fill:#333" textLength="16">РУС</text>
<path d="M1061 654q5-5 11 0M1063 656.500q3.500-3 7 0M1065 659q1.500-1.500 3 0" fill="none" stroke="#222" stroke-width="1.100"/><circle cx="1066.500" cy="661" r="1" fill="#222"/>
<path d="M1079 654h3l3-3v11l-3-3h-3z" fill="none" stroke="#222"/><path d="M1087 653q2 3.500 0 7M1089.500 651.500q3 5 0 10" fill="none" stroke="#222"/>
<rect x="1097.500" y="653" width="11" height="7" rx="1" fill="none" stroke="#222"/><rect x="1099" y="654.500" width="6" height="4" fill="#222"/><rect x="1109" y="655" width="1.500" height="3" fill="#222"/>
<text x="1149" y="650" style="font-size:9px;fill:#333" textLength="17">0:07</text>
<text x="1122" y="662.500" style="font-size:9px;fill:#333" textLength="44">19.04.2022</text>
<circle cx="1178" cy="657" r="6.500" fill="#0a6fcf"/><text x="1175.500" y="657" style="font-size:9px;fill:#fff">6</text>
</svg>
</body></html>
